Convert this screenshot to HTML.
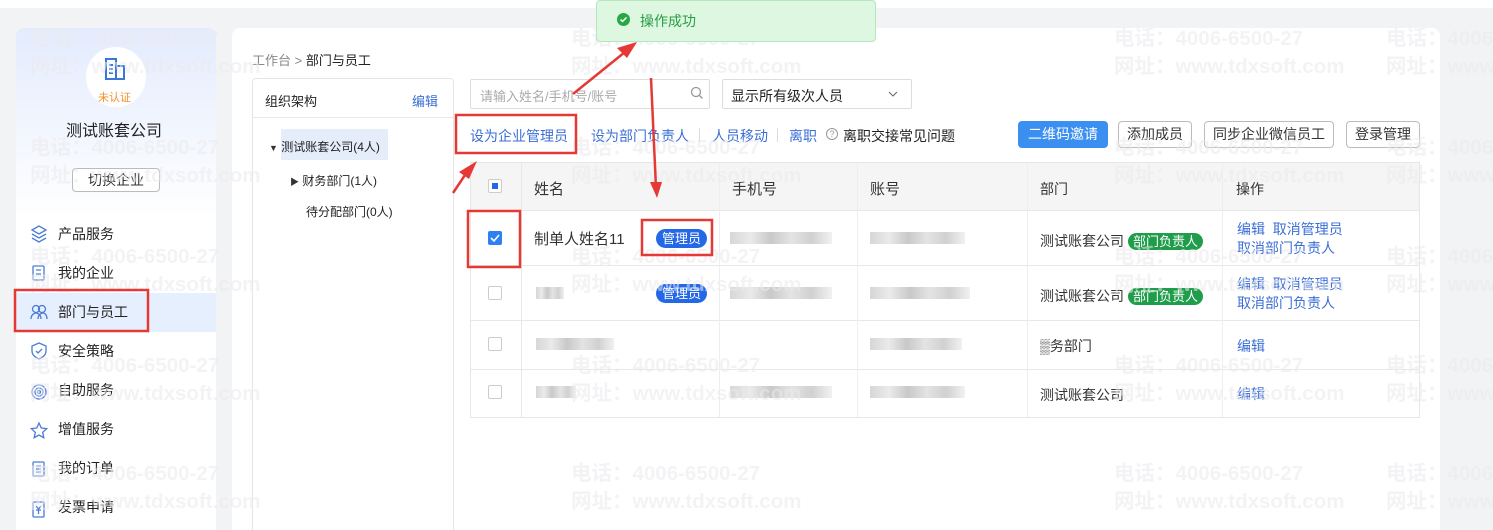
<!DOCTYPE html>
<html><head><meta charset="utf-8"><style>
*{margin:0;padding:0;box-sizing:border-box}
html,body{width:1493px;height:530px;overflow:hidden}
body{background:#f2f3f5;font-family:"Liberation Sans","Noto Sans CJK SC",sans-serif;font-size:13px;color:#333;position:relative}
.a{position:absolute}
#wmw{position:absolute;left:0;top:0;width:1493px;height:530px;overflow:hidden;z-index:5;pointer-events:none}
.wm{position:absolute;color:#ebebed;font-weight:bold;font-size:20.5px;white-space:nowrap;opacity:.55}
.link{color:#3b6fd6}
.tag{background:#2468e8;color:#fff;border-radius:10px;font-size:12px;padding:1px 6px;height:19px;line-height:17px}
.gtag{background:#1f9d4a;color:#fff;border-radius:10px;font-size:13px;padding:1px 5px;line-height:17px}
.btn{border:1px solid #bbb;border-radius:4px;height:27px;line-height:25px;padding:0 9px;background:#fff;font-size:13px}
.nav{position:absolute;left:16px;width:200px;height:39px;line-height:39px;padding-left:42px;font-size:14px;color:#222}
.cb{position:absolute;width:14px;height:14px;border:1px solid #ccc;border-radius:2px;background:#fff}
.blur{position:absolute;height:12px;background:linear-gradient(90deg,#ccc,#e5e5e5,#bbb,#ddd,#c5c5c5,#eee);opacity:.8}
</style></head><body>
<div class="a" style="left:0;top:0;width:1493px;height:8px;background:#fff"></div>
<!-- sidebar -->
<div class="a" style="left:16px;top:28px;width:200px;height:502px;background:linear-gradient(#e3ebfd,#fff 190px);border-radius:8px 8px 0 0"></div>
<div class="a" style="left:86px;top:47px;width:60px;height:60px;border-radius:50%;background:#fff"></div>
<svg class="a" style="left:104px;top:57px" width="24" height="24" viewBox="0 0 24 24" fill="none" stroke="#3a78d8" stroke-width="2"><path d="M2 2h10v20H2zM12 9h8v13h-8M5 8h4M5 12h4M5 16h4"/></svg>
<div class="a" style="left:98px;top:89px;font-size:11px;color:#f0902a">未认证</div>
<div class="a" style="left:66px;top:117px;font-size:16px;color:#222">测试账套公司</div>
<div class="a btn" style="left:72px;top:168px;width:88px;height:24px;line-height:22px;text-align:center;font-size:14px;padding:0">切换企业</div>
<div class="nav" style="top:215px">产品服务</div>
<div class="nav" style="top:254px">我的企业</div>
<div class="nav" style="top:293px;background:#e6effd">部门与员工</div>
<div class="nav" style="top:332px">安全策略</div>
<div class="nav" style="top:371px">自助服务</div>
<div class="nav" style="top:410px">增值服务</div>
<div class="nav" style="top:449px">我的订单</div>
<div class="nav" style="top:488px">发票申请</div>
<svg class="a" style="left:30px;top:225px" width="18" height="300" fill="none" stroke="#4a7bd6" stroke-width="1.3">
<path d="M2 5l7-4 7 4-7 4zM2 9l7 4 7-4M2 13l7 4 7-4"/>
<rect x="3" y="41" width="11" height="14" rx="1"/><path d="M6 45h5M6 49h5"/>
<circle cx="6" cy="84" r="3.5"/><circle cx="12" cy="84" r="3.5"/><path d="M1 94c0-4 3-6 5-6s5 2 5 6M8 94c0-4 3-6 5-6s4 2 4 6"/>
<path d="M9 118l7 3v5c0 4-3 6-7 8-4-2-7-4-7-8v-5zM6 126l2 2 4-4"/>
<circle cx="9" cy="167" r="7"/><circle cx="9" cy="167" r="4"/><circle cx="9" cy="167" r="1.5"/>
<path d="M9 198l2.3 5 5.4.6-4 3.7 1.1 5.4L9 210l-4.8 2.7 1.1-5.4-4-3.7 5.4-.6z"/>
<rect x="3" y="237" width="11" height="14" rx="1"/><path d="M6 241h5M6 244h5M6 247h5"/>
<rect x="3" y="277" width="11" height="15" rx="1"/><path d="M6 281l2.5 3 2.5-3M8.5 284v5M6 285h5"/>
</svg>
<!-- main -->
<div class="a" style="left:232px;top:28px;width:1208px;height:502px;background:#fff;border-radius:8px 8px 0 0"></div>
<div class="a" style="left:252px;top:50px;font-size:13px;color:#888">工作台 &gt; <span style="color:#222">部门与员工</span></div>
<div class="a" style="left:252px;top:78px;width:202px;height:460px;border:1px solid #e5e5e5;border-radius:4px"></div>
<div class="a" style="left:253px;top:117px;width:200px;height:1px;background:#e8e8e8"></div>
<div class="a" style="left:265px;top:91px;font-size:13px;color:#222">组织架构</div>
<div class="a link" style="left:412px;top:91px">编辑</div>
<div class="a" style="left:281px;top:129px;width:107px;height:31px;background:#e5edfb"></div>
<div class="a" style="left:269px;top:138px;font-size:12px;color:#222"><span style="font-size:9px;color:#333">▼</span> 测试账套公司(4人)</div>
<div class="a" style="left:290px;top:172px;font-size:12px;color:#222"><span style="font-size:9px;color:#333">▶</span> 财务部门(1人)</div>
<div class="a" style="left:306px;top:203px;font-size:12px;color:#222">待分配部门(0人)</div>
<!-- toolbar -->
<div class="a" style="left:470px;top:79px;width:240px;height:30px;border:1px solid #ddd;border-radius:2px"></div>
<div class="a" style="left:480px;top:86px;color:#aaa">请输入姓名/手机号/账号</div>
<svg class="a" style="left:690px;top:86px" width="14" height="14" fill="none" stroke="#999" stroke-width="1.3"><circle cx="6" cy="6" r="4.5"/><path d="M9.5 9.5l3 3"/></svg>
<div class="a" style="left:722px;top:79px;width:190px;height:30px;border:1px solid #ddd;border-radius:2px"></div>
<div class="a" style="left:731px;top:86px;color:#222;font-size:14px">显示所有级次人员</div>
<svg class="a" style="left:888px;top:90px" width="10" height="8" fill="none" stroke="#666"><path d="M1 2l4 4 4-4"/></svg>
<div class="a link" style="left:470px;top:126px;font-size:14px">设为企业管理员</div>
<div class="a link" style="left:591px;top:126px;font-size:14px">设为部门负责人</div>
<div class="a link" style="left:712px;top:126px;font-size:14px">人员移动</div>
<div class="a link" style="left:789px;top:126px;font-size:14px">离职</div>
<div class="a" style="left:576px;top:128px;width:1px;height:14px;background:#ddd"></div>
<div class="a" style="left:699px;top:128px;width:1px;height:14px;background:#ddd"></div>
<div class="a" style="left:777px;top:128px;width:1px;height:14px;background:#ddd"></div>
<div class="a" style="left:826px;top:128px;width:12px;height:12px;border:1px solid #999;border-radius:50%;font-size:9px;line-height:10px;text-align:center;color:#999">?</div>
<div class="a" style="left:843px;top:126px;font-size:14px;color:#222">离职交接常见问题</div>
<div class="a btn" style="left:1018px;top:121px;background:#3b8ff0;border-color:#3b8ff0;color:#fff;font-size:14px">二维码邀请</div>
<div class="a btn" style="left:1118px;top:121px;font-size:14px;padding:0 8px">添加成员</div>
<div class="a btn" style="left:1204px;top:121px;font-size:14px;padding:0 8px">同步企业微信员工</div>
<div class="a btn" style="left:1346px;top:121px;font-size:14px;padding:0 8px">登录管理</div>
<!-- table -->
<div class="a" style="left:470px;top:162px;width:950px;height:256px;border:1px solid #e6e6e6"></div>
<div class="a" style="left:471px;top:163px;width:948px;height:47px;background:#f5f5f5"></div>
<div class="a" style="left:471px;top:210px;width:948px;height:1px;background:#e8e8e8"></div>
<div class="a" style="left:471px;top:265px;width:948px;height:1px;background:#e8e8e8"></div>
<div class="a" style="left:471px;top:320px;width:948px;height:1px;background:#e8e8e8"></div>
<div class="a" style="left:471px;top:369px;width:948px;height:1px;background:#e8e8e8"></div>
<div class="a" style="left:521px;top:163px;width:1px;height:254px;background:#e8e8e8"></div>
<div class="a" style="left:719px;top:163px;width:1px;height:254px;background:#eee"></div>
<div class="a" style="left:857px;top:163px;width:1px;height:254px;background:#eee"></div>
<div class="a" style="left:1027px;top:163px;width:1px;height:254px;background:#eee"></div>
<div class="a" style="left:1222px;top:163px;width:1px;height:254px;background:#eee"></div>
<div class="cb" style="left:488px;top:179px"><div style="margin:3px;width:6px;height:6px;background:#2468e8"></div></div>
<div class="a" style="left:534px;top:178px;font-size:15px">姓名</div>
<div class="a" style="left:732px;top:178px;font-size:15px">手机号</div>
<div class="a" style="left:870px;top:178px;font-size:15px">账号</div>
<div class="a" style="left:1040px;top:179px;font-size:14px">部门</div>
<div class="a" style="left:1236px;top:179px;font-size:14px">操作</div>
<div class="cb" style="left:488px;top:231px;background:#2f80f0;border-color:#2f80f0"><svg width="12" height="12"><path d="M2 6l3 3 5-6" stroke="#fff" stroke-width="1.6" fill="none"/></svg></div>
<div class="cb" style="left:488px;top:286px"></div>
<div class="cb" style="left:488px;top:337px"></div>
<div class="cb" style="left:488px;top:385px"></div>
<div class="a" style="left:534px;top:228px;font-size:15px">制单人姓名11</div>
<div class="a tag" style="left:656px;top:229px;font-size:13px">管理员</div>
<div class="a tag" style="left:656px;top:284px;font-size:13px">管理员</div>
<div class="blur" style="left:536px;top:287px;width:28px"></div>
<div class="blur" style="left:730px;top:232px;width:102px"></div>
<div class="blur" style="left:870px;top:232px;width:95px"></div>
<div class="blur" style="left:730px;top:287px;width:102px"></div>
<div class="blur" style="left:870px;top:287px;width:100px"></div>
<div class="blur" style="left:536px;top:338px;width:78px"></div>
<div class="blur" style="left:870px;top:338px;width:92px"></div>
<div class="blur" style="left:536px;top:386px;width:40px"></div>
<div class="blur" style="left:730px;top:386px;width:102px"></div>
<div class="blur" style="left:870px;top:386px;width:95px"></div>
<div class="a" style="left:1040px;top:231px;font-size:14px">测试账套公司<span class="gtag" style="margin-left:4px">部门负责人</span></div>
<div class="a" style="left:1040px;top:286px;font-size:14px">测试账套公司<span class="gtag" style="margin-left:4px">部门负责人</span></div>
<div class="a" style="left:1040px;top:336px;font-size:14px">▒务部门</div>
<div class="a" style="left:1040px;top:385px;font-size:14px">测试账套公司</div>
<div class="a link" style="left:1237px;top:220px;line-height:19px;font-size:14px">编辑&nbsp; 取消管理员<br>取消部门负责人</div>
<div class="a link" style="left:1237px;top:275px;line-height:19px;font-size:14px">编辑&nbsp; 取消管理员<br>取消部门负责人</div>
<div class="a link" style="left:1237px;top:336px;font-size:14px">编辑</div>
<div class="a link" style="left:1237px;top:384px;font-size:14px">编辑</div>
<!-- toast -->
<div class="a" style="left:596px;top:0;width:280px;height:42px;background:#def7e0;border:1px solid #b5e6bc;border-radius:4px;z-index:6"></div>
<div class="a" style="left:617px;top:13px;width:13px;height:13px;border-radius:50%;background:#27a845;z-index:7"><svg width="13" height="13"><path d="M3.5 6.5l2 2 4-4" stroke="#fff" stroke-width="1.5" fill="none"/></svg></div>
<div class="a" style="left:640px;top:11px;color:#2a9c46;z-index:7;font-size:14px">操作成功</div>
<!-- watermarks -->
<div id="wmw">
<div class="wm" style="left:30px;top:21px">电话：4006-6500-27</div><div class="wm" style="left:30px;top:49px">网址：www.tdxsoft.com</div>
<div class="wm" style="left:571px;top:21px">电话：4006-6500-27</div><div class="wm" style="left:571px;top:49px">网址：www.tdxsoft.com</div>
<div class="wm" style="left:1114px;top:21px">电话：4006-6500-27</div><div class="wm" style="left:1114px;top:49px">网址：www.tdxsoft.com</div>
<div class="wm" style="left:1386px;top:21px">电话：4006-6500-27</div><div class="wm" style="left:1386px;top:49px">网址：www.tdxsoft.com</div>
<div class="wm" style="left:30px;top:130px">电话：4006-6500-27</div><div class="wm" style="left:30px;top:158px">网址：www.tdxsoft.com</div>
<div class="wm" style="left:571px;top:130px">电话：4006-6500-27</div><div class="wm" style="left:571px;top:158px">网址：www.tdxsoft.com</div>
<div class="wm" style="left:1114px;top:130px">电话：4006-6500-27</div><div class="wm" style="left:1114px;top:158px">网址：www.tdxsoft.com</div>
<div class="wm" style="left:1386px;top:130px">电话：4006-6500-27</div><div class="wm" style="left:1386px;top:158px">网址：www.tdxsoft.com</div>
<div class="wm" style="left:30px;top:239px">电话：4006-6500-27</div><div class="wm" style="left:30px;top:267px">网址：www.tdxsoft.com</div>
<div class="wm" style="left:571px;top:239px">电话：4006-6500-27</div><div class="wm" style="left:571px;top:267px">网址：www.tdxsoft.com</div>
<div class="wm" style="left:1114px;top:239px">电话：4006-6500-27</div><div class="wm" style="left:1114px;top:267px">网址：www.tdxsoft.com</div>
<div class="wm" style="left:1386px;top:239px">电话：4006-6500-27</div><div class="wm" style="left:1386px;top:267px">网址：www.tdxsoft.com</div>
<div class="wm" style="left:30px;top:348px">电话：4006-6500-27</div><div class="wm" style="left:30px;top:376px">网址：www.tdxsoft.com</div>
<div class="wm" style="left:571px;top:348px">电话：4006-6500-27</div><div class="wm" style="left:571px;top:376px">网址：www.tdxsoft.com</div>
<div class="wm" style="left:1114px;top:348px">电话：4006-6500-27</div><div class="wm" style="left:1114px;top:376px">网址：www.tdxsoft.com</div>
<div class="wm" style="left:1386px;top:348px">电话：4006-6500-27</div><div class="wm" style="left:1386px;top:376px">网址：www.tdxsoft.com</div>
<div class="wm" style="left:30px;top:456px">电话：4006-6500-27</div><div class="wm" style="left:30px;top:484px">网址：www.tdxsoft.com</div>
<div class="wm" style="left:571px;top:456px">电话：4006-6500-27</div><div class="wm" style="left:571px;top:484px">网址：www.tdxsoft.com</div>
<div class="wm" style="left:1114px;top:456px">电话：4006-6500-27</div><div class="wm" style="left:1114px;top:484px">网址：www.tdxsoft.com</div>
<div class="wm" style="left:1386px;top:456px">电话：4006-6500-27</div><div class="wm" style="left:1386px;top:484px">网址：www.tdxsoft.com</div>
</div>
<!-- annotations -->
<svg class="a" style="left:0;top:0;z-index:10" width="1493" height="530" fill="none" stroke="#e53935" stroke-width="2.5">
<rect x="15" y="290" width="133" height="41"/>
<rect x="456" y="115" width="120" height="38"/>
<rect x="468" y="211" width="52" height="56"/>
<rect x="642" y="220" width="70" height="35"/>
<path d="M573 94L625 52"/><path d="M637 42l-20 6 10 10z" fill="#e53935" stroke="none"/>
<path d="M453 193L465 175"/><path d="M477 161l-18 11 10 7z" fill="#e53935" stroke="none"/>
<path d="M651 78L656 188"/><path d="M657 198l-7-16 12 0z" fill="#e53935" stroke="none"/>
</svg>
</body></html>
